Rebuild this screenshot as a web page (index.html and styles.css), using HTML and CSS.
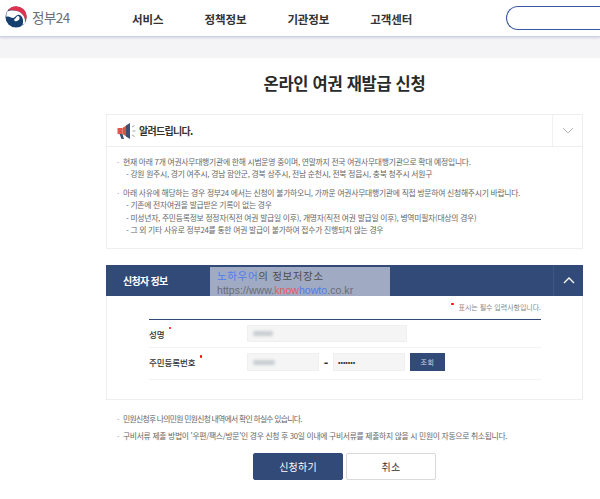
FILE: index.html
```html
<!DOCTYPE html>
<html lang="ko">
<head>
<meta charset="utf-8">
<title>온라인 여권 재발급 신청</title>
<link rel="stylesheet" href="styles.css">
</head>
<body>
<header class="top">
  <div class="logo">
    <svg class="emblem" width="22" height="22" viewBox="0 0 24 24">
      <circle cx="12" cy="12" r="11.500" fill="#16406f"/>
      <path d="M3.200 4.600A11.500 11.500 0 0 1 23.500 12C23.500 14.500 23 16.500 21.800 18C22.300 12.500 19 7.500 14 5.800C10.500 4.600 6.500 4.400 3.200 4.600Z" fill="#dd3350"/>
      <path d="M2.200 6.400C4.500 4.600 9.500 4.300 14 5.800C19 7.500 22.300 12.500 21.800 18C20.800 19.200 20 20 19 20.700C20.800 16.500 19.500 11 15.800 9.800C12.500 8.800 11.500 12.800 9 13C6.200 13.200 4.500 10.500 1.500 12C1.300 10 1.500 8 2.200 6.400Z" fill="#fff"/>
      <path d="M11.300 16.500C14 17 16.200 15 15.900 12.600C15.600 10.800 13.800 10.300 12.700 11.600C11.800 12.800 11.300 14 9.800 14.600C10 15.500 10.500 16.300 11.300 16.500Z" fill="#fff"/>
    </svg>
    <span class="logo-text">정부24</span>
  </div>
  <nav class="gnb">
    <a>서비스</a>
    <a>정책정보</a>
    <a>기관정보</a>
    <a>고객센터</a>
  </nav>
  <div class="search"></div>
</header>
<div class="band"></div>
<main class="wrap">
  <h1 class="title">온라인 여권 재발급 신청</h1>

  <section class="notice">
    <div class="notice-head">
      <svg width="19" height="18" viewBox="0 0 19 18">
        <path d="M0.500 6h5v6h-5z" fill="#e2574c"/>
        <path d="M5.500 6 10 3v12l-4.500-3z" fill="#d4573f"/>
        <path d="M9 3.500 13 1v16l-4-2.500z" fill="#3d4f73"/>
        <path d="M2.500 12h3l1.500 5H4.500z" fill="#3d4f73"/>
        <path d="M15 5l2.500-1.500M15.500 9H18.500M15 13l2.500 1.500" stroke="#a5a5a5" stroke-width="1"/>
      </svg>
      <strong>알려드립니다.</strong>
      <span class="toggle">
        <svg width="12" height="7" viewBox="0 0 12 7"><path d="M1 1l5 5 5-5" fill="none" stroke="#b5b5b5"/></svg>
      </span>
    </div>
    <div class="notice-body">
      <ul class="list">
        <li>현재 아래 7개 여권사무대행기관에 한해 시범운영 중이며, 연말까지 전국 여권사무대행기관으로 확대 예정입니다.
          <p>- 강원 원주시, 경기 여주시, 경남 함안군, 경북 상주시, 전남 순천시, 전북 정읍시, 충북 청주시 서원구</p>
        </li>
        <li>아래 사유에 해당하는 경우 정부24 에서는 신청이 불가하오니, 가까운 여권사무대행기관에 직접 방문하여 신청해주시기 바랍니다.
          <p>- 기존에 전자여권을 발급받은 기록이 없는 경우</p>
          <p>- 미성년자, 주민등록정보 정정자(직전 여권 발급일 이후), 개명자(직전 여권 발급일 이후), 병역미필자(대상의 경우)</p>
          <p>- 그 외 기타 사유로 정부24를 통한 여권 발급이 불가하여 접수가 진행되지 않는 경우</p>
        </li>
      </ul>
    </div>
  </section>

  <section class="applicant">
    <div class="app-head">
      <span class="app-title">신청자 정보</span>
      <span class="toggle dark">
        <svg width="12" height="7" viewBox="0 0 12 7"><path d="M1 6l5-5 5 5" fill="none" stroke="#fff" stroke-width="1.300"/></svg>
      </span>
      <div class="watermark">
        <div class="wm-1"><span class="blue">노하우어</span>의 정보저장소</div>
        <div class="wm-2">https://www.<span class="red">know</span><span class="blue">howto</span>.co.kr</div>
      </div>
    </div>
    <div class="app-body">
      <p class="req-note"><i class="dot"></i>표시는 필수 입력사항입니다.</p>
      <div class="form">
        <div class="row">
          <div class="label">성명<i class="dot"></i></div>
          <div class="field wide"><span class="blur b1"></span></div>
        </div>
        <div class="row tall">
          <div class="label">주민등록번호<i class="dot"></i></div>
          <div class="field short"><span class="blur b2"></span></div>
          <span class="dash">-</span>
          <div class="field short2">•••••••</div>
          <button class="lookup">조회</button>
        </div>
      </div>
    </div>
  </section>

  <ul class="foot-notes">
    <li class="tight">민원신청후 나의민원 민원신청 내역에서 확인 하실수 있습니다.</li>
    <li class="snug">구비서류 제출 방법이 '우편/팩스/방문'인 경우 신청 후 30일 이내에 구비서류를 제출하지 않을 시 민원이 자동으로 취소됩니다.</li>
  </ul>

  <div class="actions">
    <button class="btn primary">신청하기</button>
    <button class="btn">취소</button>
  </div>
</main>
</body>
</html>
```

FILE: styles.css
```css
* { box-sizing: border-box; }
html, body { margin: 0; padding: 0; }
body {
  width: 600px;
  height: 499px;
  overflow: hidden;
  background: #fff;
  font-family: "Noto Sans CJK KR", "Noto Sans", sans-serif;
  color: #333;
}
.top {
  height: 37px;
  display: flex;
  align-items: center;
  background: #fff;
  border-bottom: 1px solid #ccd2e0;
  box-shadow: 0 1px 2px #d3d6e2;
  position: relative;
}
.logo { width: 132px; display: flex; align-items: center; padding-left: 5px; gap: 5px; margin-top: -2px; }
.logo-text { font-size: 13.500px; color: #6b6f76; letter-spacing: -0.5px; line-height: 20px; }
.gnb { display: flex; gap: 41px; margin-top: 2px; }
.gnb a { font-size: 11.500px; font-weight: 700; color: #333; line-height: 16px; letter-spacing: -0.1px; }
.search {
  width: 94px;
  height: 24px;
  margin-left: auto;
  border: 1.500px solid #3a58a0;
  border-right: 0;
  border-radius: 12px 0 0 12px;
  margin-top: -1px;
}
.band { height: 21px; background: #f4f3f5; }
.wrap { padding: 0 17px 0 106px; }
.title {
  margin: 13px 0 0;
  text-align: center;
  font-size: 16.500px;
  font-weight: 700;
  line-height: 24px;
  color: #2a2a2a;
  letter-spacing: -0.3px;
}
.notice { margin-top: 19px; border: 1px solid #eeeeee; height: 135px; }
.notice-head {
  height: 32px;
  display: flex;
  align-items: center;
  padding-left: 10px;
  gap: 3px;
  border-bottom: 1px solid #eeeeee;
  position: relative;
}
.notice-head strong { font-size: 10px; color: #333; letter-spacing: -0.7px; }
.toggle {
  position: absolute;
  right: 0;
  top: 0;
  width: 30px;
  height: 100%;
  display: flex;
  align-items: center;
  justify-content: center;
  border-left: 1px solid #f1f1f1;
}
.toggle.dark { border-left: 1px solid #3e5783; z-index: 1; }
.notice-body { padding: 8px 10px 0; }
.list { list-style: none; margin: 0; padding: 0; }
.list li, .foot-notes li { position: relative; padding-left: 6px; font-size: 7.800px; line-height: 13px; color: #666; letter-spacing: -0.25px; white-space: nowrap; }
.list li::before, .foot-notes li::before { content: "·"; position: absolute; left: 0; top: 0; color: #999; }
.list li + li { margin-top: 5.500px; }
.list p { margin: 0; padding-left: 3px; line-height: 12.500px; }
.applicant { margin-top: 16px; border: 1px solid #eeeeee; border-top: 0; height: 135px; }
.app-head {
  height: 31px;
  margin: 0 -1px;
  background: #324a77;
  color: #fff;
  position: relative;
  display: flex;
  align-items: center;
  padding-left: 17px;
}
.app-title { font-size: 10px; font-weight: 700; letter-spacing: -0.7px; }
.watermark {
  position: absolute;
  left: 104px;
  top: 2px;
  width: 180px;
  height: 29px;
  background: #a0abc3;
  padding: 1px 0 0 7px;
  color: #4d4d4d;
}
.wm-1 { font-size: 10.500px; line-height: 15.500px; letter-spacing: 0.65px; }
.wm-2 { font-family: "Liberation Sans", sans-serif; font-size: 10.500px; line-height: 12px; color: #676c76; letter-spacing: 0.05px; }
.blue { color: #4f7bed; }
.red { color: #e4595f; }
.app-body { padding: 0 41px 0 42px; }
.req-note {
  margin: 0;
  height: 23px;
  text-align: right;
  font-size: 7px;
  line-height: 23px;
  color: #888;
  letter-spacing: -0.05px;
}
.req-note .dot { position: relative; top: -5px; margin-right: 5px; }
.dot { display: inline-block; width: 2.500px; height: 2.500px; background: #f00; border-radius: 50%; }
.form { border-top: 1px solid #324a77; }
.row {
  height: 28px;
  display: flex;
  align-items: center;
  border-bottom: 1px solid #f3f3f3;
}
.row.tall { height: 32px; padding-bottom: 3px; }
.label { width: 98px; font-size: 8.500px; font-weight: 500; color: #333; letter-spacing: -0.05px; position: relative; }
.label .dot { position: absolute; top: -1px; margin-left: 4px; }
.field { height: 17px; background: #f5f5f5; border: 1px solid #f0f0f0; display: flex; align-items: center; font-size: 6.500px; font-weight: 700; padding-left: 4px; color: #333; }
.row.tall .field { height: 18px; }
.wide { width: 160px; }
.short { width: 72px; }
.short2 { width: 72px; }
.dash { width: 14px; text-align: center; font-size: 12px; font-weight: 900; }
.blur { display: block; height: 5px; background: #c7cdd2; filter: blur(1.500px); border-radius: 2px; }
.b1 { width: 20px; margin-left: 1px; }
.b2 { width: 22px; margin-left: 1px; }
.lookup {
  margin-left: 5px;
  width: 35px;
  height: 18px;
  padding: 0;
  border: 0;
  background: #324a77;
  color: #c9d2e3;
  font-family: inherit;
  font-size: 7px;
  letter-spacing: 0.5px;
}
.foot-notes { list-style: none; margin: 10px 0 0; padding: 0; }
.foot-notes li { margin-left: 11px; line-height: 17px; }
.foot-notes li.tight { letter-spacing: -0.7px; }
.foot-notes li.snug { letter-spacing: -0.3px; }
.actions { display: flex; justify-content: center; gap: 3px; margin-top: 9px; }
.btn {
  width: 90px;
  height: 27px;
  padding: 0;
  border: 1px solid #d9d9d9;
  border-radius: 2px;
  background: #fff;
  font-family: inherit;
  font-size: 10px;
  color: #333;
  letter-spacing: 0.2px;
}
.btn.primary { background: #324a77; border-color: #324a77; color: #fff; }
```
